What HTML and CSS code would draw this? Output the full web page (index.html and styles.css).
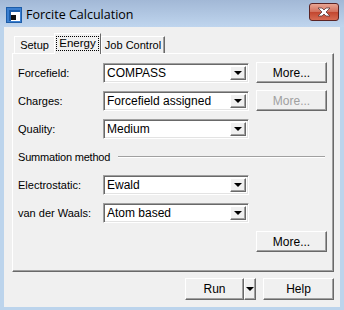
FILE: index.html
```html
<!DOCTYPE html>
<html lang="en">
<head>
<meta charset="UTF-8" />
<title>Forcite Calculation</title>
<link rel="stylesheet" href="styles.css">
</head>
<body>
<div class="window">
  <div class="titlebar">
    <svg class="app-icon" width="16" height="16" viewBox="0 0 16 16">
      <rect x="0" y="0" width="16" height="16" fill="#1c5ca8"/>
      <rect x="1" y="1" width="14" height="14" fill="#3b7fd0"/>
      <rect x="3" y="3" width="11" height="11" fill="#ffffff"/>
      <rect x="3" y="3" width="11" height="2" fill="#1c5ca8"/>
      <rect x="3" y="3" width="2" height="11" fill="#1c5ca8"/>
      <rect x="5" y="8" width="5" height="5" fill="#111"/>
    </svg>
    <span class="title">Forcite Calculation</span>
    <div class="close-btn">
      <svg width="16" height="10" viewBox="0 0 16 10">
        <path d="M2 1 L6 1 L8 3 L10 1 L14 1 L10 5 L14 9 L10 9 L8 7 L6 9 L2 9 L6 5 Z" fill="#fff" stroke="#5a3a3a" stroke-width="0.8"/>
      </svg>
    </div>
  </div>

  <div class="client">
    <div class="tabs">
      <div class="tab setup">Setup</div>
      <div class="tab active"><span class="focus">Energy</span></div>
      <div class="tab last">Job Control</div>
    </div>

    <div class="panel">
      <div class="row">
        <label class="lbl">Forcefield:</label>
        <div class="combo"><span class="val">COMPASS</span><span class="drop"><i></i></span></div>
        <button class="btn more">More...</button>
      </div>
      <div class="row">
        <label class="lbl">Charges:</label>
        <div class="combo"><span class="val">Forcefield assigned</span><span class="drop"><i></i></span></div>
        <button class="btn more" disabled>More...</button>
      </div>
      <div class="row">
        <label class="lbl">Quality:</label>
        <div class="combo"><span class="val">Medium</span><span class="drop"><i></i></span></div>
      </div>
      <div class="row group">
        <span class="group-title">Summation method</span>
        <span class="group-line"></span>
      </div>
      <div class="row">
        <label class="lbl">Electrostatic:</label>
        <div class="combo"><span class="val">Ewald</span><span class="drop"><i></i></span></div>
      </div>
      <div class="row">
        <label class="lbl">van der Waals:</label>
        <div class="combo"><span class="val">Atom based</span><span class="drop"><i></i></span></div>
      </div>
      <div class="row end">
        <button class="btn more">More...</button>
      </div>
    </div>

    <div class="footer">
      <div class="split">
        <button class="btn run">Run</button>
        <button class="btn arrow"><i></i></button>
      </div>
      <button class="btn help">Help</button>
    </div>
  </div>
</div>
</body>
</html>
```

FILE: styles.css
```css
body {
  margin: 0;
  padding: 0;
  font-family: "Liberation Sans", Arial, sans-serif;
  font-size: 11px;
  color: #000;
}
.window {
  width: 344px;
  height: 310px;
  background: #bcd4ec;
  display: flex;
  flex-direction: column;
  box-sizing: border-box;
}
.titlebar {
  height: 27px;
  display: flex;
  align-items: center;
  background: linear-gradient(#a2b8d6, #bfd5ee);
  padding-left: 6px;
  box-sizing: border-box;
}
.app-icon {
  margin-top: 3px;
  flex: none;
}
.title {
  margin-left: 4px;
  margin-top: 2px;
  font-family: "Open Sans", "Liberation Sans", sans-serif;
  font-size: 12.5px;
  color: #000;
}
.close-btn {
  margin-left: auto;
  margin-right: 5px;
  margin-top: -4px;
  width: 28px;
  height: 16px;
  border: 1px solid #5b2424;
  border-radius: 3px;
  background: linear-gradient(#e8a593, #d26f5b 50%, #c2462f 51%, #d76b52);
  display: flex;
  align-items: center;
  justify-content: center;
}
.client {
  margin: 0 4px 3px 4px;
  height: 280px;
  background: #f0f0f0;
  padding: 7px 6px 0 8px;
  box-sizing: border-box;
}

/* tabs */
.tabs {
  display: flex;
  align-items: flex-end;
  height: 19px;
  padding-left: 2px;
  position: relative;
  z-index: 1;
}
.tab {
  flex: none;
  height: 17px;
  box-sizing: border-box;
  padding-top: 2px;
  text-align: center;
  white-space: nowrap;
  border: 1px solid;
  border-color: #fff #696969 transparent #fff;
  border-bottom: none;
  background: #f0f0f0;
  line-height: 13px;
  font-size: 11px;
}
.tab.setup {
  width: 41px;
}
.tab.active {
  width: 47px;
  height: 21px;
  margin: 0 -1px -1px -1px;
  padding-top: 3px;
  position: relative;
}
.tab.last {
  width: 64px;
  margin-left: 1px;
  box-shadow: inset -1px 0 #a0a0a0;
}
.focus {
  display: inline-block;
  outline: 1px dotted #000;
  padding: 0 2px;
  line-height: 13px;
  font-size: 11.5px;
}

/* panel */
.panel {
  height: 219px;
  box-sizing: border-box;
  border: 1px solid;
  border-color: #fff #696969 #696969 #fff;
  box-shadow: inset -1px -1px #a0a0a0;
  padding: 8px 0 0 5px;
  display: flex;
  flex-direction: column;
  gap: 7px;
}
.row {
  height: 21px;
  display: flex;
  align-items: center;
}
.row.end {
  padding-left: 238px;
  margin-top: 1px;
}
.lbl {
  width: 85px;
  flex: none;
}
.group-title {
  flex: none;
  letter-spacing: -0.2px;
}
.group-line {
  flex: 1;
  height: 0;
  margin: 0 8px 0 8px;
  border-top: 1px solid #a0a0a0;
  border-bottom: 1px solid #fff;
}

.combo {
  width: 146px;
  height: 20px;
  box-sizing: border-box;
  border: 1px solid;
  border-color: #a0a0a0 #fff #fff #a0a0a0;
  box-shadow: inset 1px 1px #696969, inset -1px -1px #e3e3e3;
  background: #fff;
  display: flex;
  align-items: stretch;
  padding: 2px;
  flex: none;
}
.val {
  flex: 1;
  padding-left: 1px;
  line-height: 15px;
  font-size: 12px;
}
.drop {
  width: 16px;
  box-sizing: border-box;
  background: #f0f0f0;
  border: 1px solid;
  border-color: #fff #696969 #696969 #fff;
  box-shadow: inset -1px -1px #a0a0a0;
  display: flex;
  align-items: center;
  justify-content: center;
}
.drop i, .arrow i {
  width: 0;
  height: 0;
  border-left: 4px solid transparent;
  border-right: 4px solid transparent;
  border-top: 4px solid #000;
}

.btn {
  font-family: "Liberation Sans", Arial, sans-serif;
  font-size: 12px;
  color: #000;
  background: #f0f0f0;
  border: 1px solid;
  border-color: #fff #696969 #696969 #fff;
  box-shadow: inset -1px -1px #a0a0a0;
  padding: 0;
  box-sizing: border-box;
  height: 21px;
}
.btn:disabled {
  color: #a0a0a0;
}
.more {
  width: 71px;
  margin-left: 7px;
}
.row.end .more {
  margin-left: 0;
}

/* footer */
.footer {
  display: flex;
  justify-content: flex-end;
  gap: 7px;
  padding-top: 6px;
}
.split {
  display: flex;
}
.run, .help {
  height: 22px;
}
.run {
  width: 59px;
}
.arrow {
  width: 12px;
  height: 22px;
  display: flex;
  align-items: center;
  justify-content: center;
}
.help {
  width: 71px;
}
```
